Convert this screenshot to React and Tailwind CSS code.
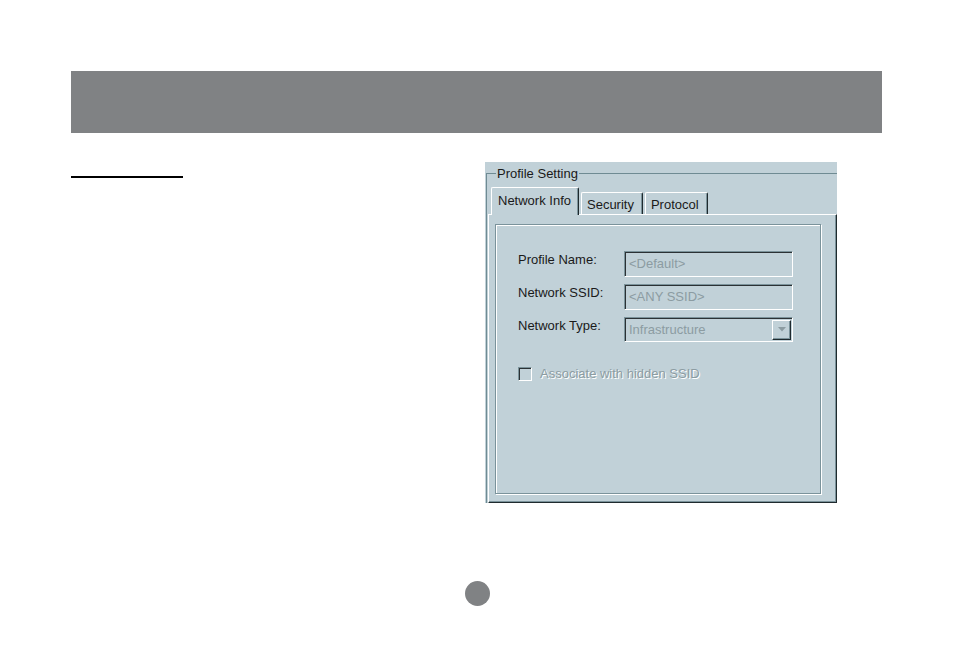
import React from "react";

const bg = "bg-[#c1d1d8]";

function Tab({ label, selected }) {
  if (selected) {
    return (
      <div className={`relative z-10 h-[28px] -mb-[1px] pl-[6px] pr-[7px] pt-[5px] ${bg} border-t border-l border-white border-r border-r-[#1f2a2e] rounded-t-[2px] shadow-[inset_-1px_0_0_#7b939b] text-[13px] leading-[16px] text-[#1a1a1a]`}>
        {label}
      </div>
    );
  }
  return (
    <div className={`h-[22px] pl-[5px] pr-[8px] pt-[4px] ${bg} border-t border-l border-white border-r border-r-[#1f2a2e] rounded-t-[2px] shadow-[inset_-1px_0_0_#7b939b] text-[13px] leading-[16px] text-[#1a1a1a]`}>
      {label}
    </div>
  );
}

function TextBox({ value, h = "h-[26px]" }) {
  return (
    <div className={`w-[169px] ${h} border-t border-l border-[#7b939b] border-b border-r border-b-white border-r-white shadow-[inset_1px_1px_0_#2b3134] pl-[4px] flex items-center text-[13px] text-[#8c9ca2]`}>
      {value}
    </div>
  );
}

function Select({ value }) {
  return (
    <div className="w-[169px] h-[25px] border-t border-l border-[#7b939b] border-b border-r border-b-white border-r-white shadow-[inset_1px_1px_0_#2b3134] pl-[4px] pr-[1px] flex items-center justify-between text-[13px] text-[#8c9ca2]">
      <span>{value}</span>
      <div className={`w-[19px] h-[20px] ${bg} border-t border-l border-white border-b border-r border-b-[#1f2a2e] border-r-[#1f2a2e] shadow-[inset_-1px_-1px_0_#7b939b] flex items-center justify-center`}>
        <svg width="8" height="5" viewBox="0 0 8 5">
          <path d="M0 0 L8 0 L4 4.5 Z" fill="#8c9ca2" />
        </svg>
      </div>
    </div>
  );
}

function Dialog() {
  return (
    <div className={`w-[352px] h-[341px] ${bg} pt-[4px] pl-[1px] font-['Liberation_Sans',Arial,sans-serif]`}>
      <fieldset className="border-t border-l border-[#6f8b93]">
        <legend className="ml-[9px] px-[1px] text-[13px] leading-[15px] text-[#1a1a1a]">Profile Setting</legend>
        <div className="flex items-end gap-[2px] pl-[4px] pt-[6px]">
          <Tab label="Network Info" selected />
          <Tab label="Security" />
          <Tab label="Protocol" />
        </div>
        <div className="ml-[1px] h-[289px] border-t border-l border-white border-r border-b border-r-[#1f2a2e] border-b-[#1f2a2e] shadow-[inset_-1px_-1px_0_#7b939b] pt-[9px] pl-[6px] pr-[15px] pb-[8px]">
          <div className="h-full border border-[#7b939b] shadow-[inset_1px_1px_0_#fff,1px_1px_0_#fff] pt-[26px] pl-[22px]">
            <div className="grid grid-cols-[106px_169px] gap-y-[7px] text-[13px] leading-[16px] text-[#1a1a1a]">
              <div className="pt-[1px]">Profile Name:</div>
              <TextBox value="<Default>" />
              <div className="pt-[1px]">Network SSID:</div>
              <TextBox value="<ANY SSID>" />
              <div className="pt-[1px]">Network Type:</div>
              <Select value="Infrastructure" />
            </div>
            <div className="flex items-center gap-[8px] mt-[24px]">
              <div className="w-[14px] h-[14px] border-t border-l border-[#7b939b] border-b border-r border-b-white border-r-white shadow-[inset_1px_1px_0_#2b3134]" />
              <span className="text-[13px] leading-[16px] text-[#8c9ca2] [text-shadow:1px_1px_0_#ffffff]">Associate with hidden SSID</span>
            </div>
          </div>
        </div>
      </fieldset>
    </div>
  );
}

export default function App() {
  return (
    <div className="w-[954px] h-[663px] bg-white overflow-hidden">
      <div className="pt-[71px] pl-[71px]">
        <div className="w-[811px] h-[62px] bg-[#808284]" />
      </div>
      <div className="flex pl-[71px] pt-[29px]">
        <div className="w-[414px] pt-[14px]">
          <div className="w-[112px] h-[2px] bg-black" />
        </div>
        <Dialog />
      </div>
      <div className="flex justify-center pt-[78px]">
        <div className="w-[25px] h-[25px] rounded-full bg-[#808284]" />
      </div>
    </div>
  );
}
